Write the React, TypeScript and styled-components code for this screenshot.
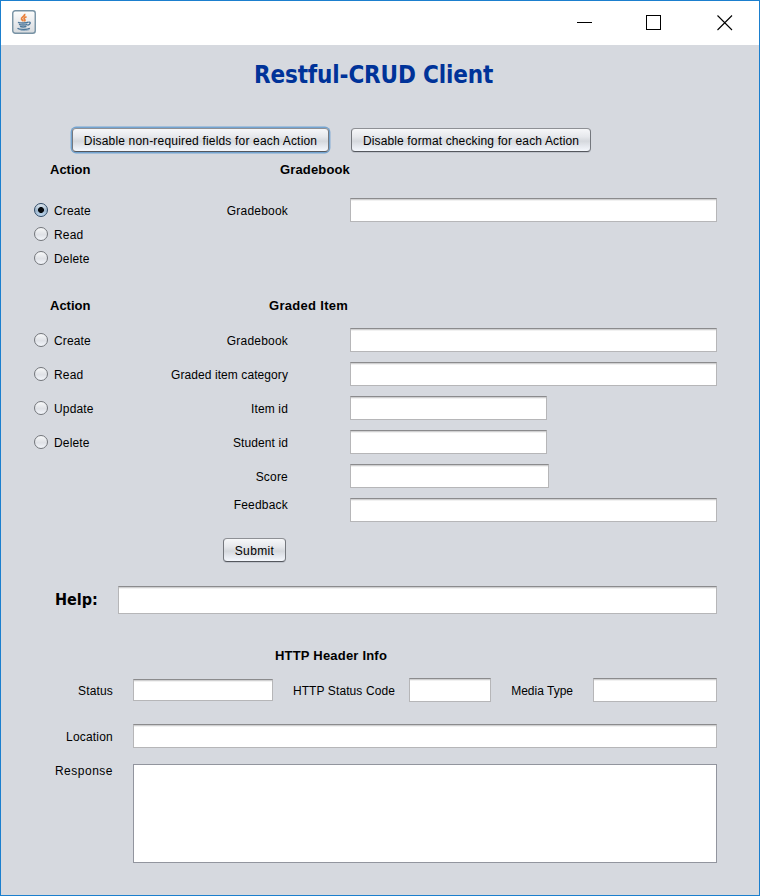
import React, { useState } from "react";
import styled, { createGlobalStyle, css } from "styled-components";

const GlobalStyle = createGlobalStyle`
  body { margin: 0; background: #d6d9df; }
  * { box-sizing: border-box; }
`;

const Window = styled.div`
  width: 760px;
  height: 896px;
  border: 1px solid #1b7fce;
  background: #d6d9df;
  color: #000;
  font: 12px/16px "Liberation Sans", Arial, sans-serif;
  overflow: hidden;
`;

const TitleBar = styled.header`
  height: 44px;
  padding: 9px 0 0 11px;
  background: #fff;
  display: flex;
  justify-content: space-between;
  align-items: flex-start;
`;

const WindowControls = styled.div`
  display: flex;
  gap: 54px;
  padding: 5px 26px 0 0;

  svg { display: block; }
  svg:last-child { margin-left: 2px; }
`;

const Title = styled.h1`
  margin: 0;
  height: 83px;
  padding: 15px 0 0 253px;
  font: bold 24px/30px "DejaVu Sans Condensed", "DejaVu Sans", sans-serif;
  font-stretch: condensed;
  letter-spacing: -0.15px;
  color: #003399;
  white-space: nowrap;
`;

const ButtonRow = styled.div<{ $left: number }>`
  display: flex;
  gap: 22px;
  height: 24px;
  padding-left: ${(p) => p.$left}px;
`;

const PushButton = styled.button<{ $width: number; $focused?: boolean; $spacing?: number }>`
  width: ${(p) => p.$width}px;
  height: 24px;
  padding: 1px 0 0;
  border: 1px solid;
  border-color: #8e9095 #74777d #55585e;
  border-radius: 4px;
  background: linear-gradient(#f6f7f9 0%, #e6e8ec 35%, #d5d8dd 55%, #e5e8ee 78%, #f5f8fd 100%);
  box-shadow: ${(p) => (p.$focused ? "0 0 0 1.4px #73a4d1" : "0 1px 0 rgba(150, 155, 165, 0.35)")};
  font: inherit;
  color: #000;
  letter-spacing: ${(p) => p.$spacing ?? 0}px;
  white-space: nowrap;
  outline: none;
`;

const Headings = styled.div<{ $top: number; $second: number }>`
  display: grid;
  grid-template-columns: ${(p) => p.$second - 50}px auto;
  height: 16px;
  margin: ${(p) => p.$top}px 0 0 49px;
`;

const Heading = styled.h2<{ $spacing?: number }>`
  margin: 0;
  font-size: 13px;
  line-height: 16px;
  font-weight: bold;
  letter-spacing: ${(p) => p.$spacing ?? 0}px;
  white-space: nowrap;
`;

const FormGrid = styled.div<{ $top: number; $pitch: number }>`
  display: grid;
  grid-template-columns: 100px 155px 1fr;
  grid-auto-rows: ${(p) => p.$pitch}px;
  margin: ${(p) => p.$top}px 0 0 32px;
`;

const RadioLabel = styled.label`
  grid-column: 1;
  display: flex;
  align-items: center;
  gap: 6px;
  height: 24px;
  padding-left: 1px;
  letter-spacing: 0.15px;
`;

const RadioText = styled.span`
  padding-top: 2px;
`;

const RadioInput = styled.input`
  appearance: none;
  width: 14px;
  height: 14px;
  margin: 0;
  border: 1px solid #73767b;
  border-radius: 50%;
  outline: none;
  background: linear-gradient(#f7f8f9, #dfe1e6 55%, #f3f6fb);

  &:checked {
    border-color: #2f4a66;
    background:
      radial-gradient(circle at center, #05080c 0 2.6px, transparent 3.3px),
      linear-gradient(#dfe8f0, #9db5cb 55%, #bcd6ee);
  }
`;

const FieldLabel = styled.label<{ $top?: number; $spacing?: number }>`
  grid-column: 2;
  height: 16px;
  margin-top: ${(p) => p.$top ?? 5}px;
  text-align: right;
  letter-spacing: ${(p) => p.$spacing ?? 0.15}px;
  white-space: nowrap;
`;

const fieldFrame = css`
  display: block;
  margin: 0;
  padding: 2px 5px;
  border: 1px solid #b6b6b8;
  border-radius: 0;
  outline: none;
  background: #fff;
  font: inherit;
`;

const TextField = styled.input<{ $width: number; $height?: number }>`
  ${fieldFrame}
  width: ${(p) => p.$width}px;
  height: ${(p) => p.$height ?? 24}px;
  border-top-color: #8b8b8d;
  box-shadow: inset 0 1px 0 #d0d0d1, inset 0 2px 0 #f1f1f1;
`;

const FormField = styled(TextField)`
  grid-column: 3;
  margin-left: 62px;
`;

const TextBox = styled.textarea`
  ${fieldFrame}
  width: 584px;
  height: 99px;
  border-color: #92959e;
  resize: none;
`;

const SubmitRow = styled(ButtonRow)`
  margin-top: 6px;
`;

const HelpRow = styled.div`
  display: grid;
  grid-template-columns: 63px auto;
  align-items: center;
  margin: 24px 0 0 54px;
  height: 28px;
`;

const HelpLabel = styled.label`
  font: bold 16px/22px "DejaVu Sans Condensed", "DejaVu Sans", sans-serif;
  font-stretch: condensed;
`;

const CenterHeading = styled(Heading)`
  margin: 34px 0 0 274px;
`;

const ResponseLabel = styled.label<{ $spacing?: number; $top?: number }>`
  height: 16px;
  margin-top: ${(p) => p.$top ?? 5}px;
  text-align: right;
  letter-spacing: ${(p) => p.$spacing ?? 0.15}px;
  white-space: nowrap;
`;

const StatusGrid = styled.div`
  display: grid;
  grid-template-columns: 112px 160px 122px 96px 82px auto;
  align-items: start;
  height: 24px;
  margin-top: 14px;
`;

const WideRow = styled.div<{ $top: number }>`
  display: grid;
  grid-template-columns: 112px auto;
  column-gap: 20px;
  margin-top: ${(p) => p.$top}px;
`;

const StatusField = styled(TextField)`
  margin: 1px 0 0 20px;
`;
const CodeField = styled(TextField)`
  margin-left: 14px;
`;
const MediaField = styled(TextField)`
  margin-left: 20px;
`;

const JavaIcon = () => (
  <svg width="24" height="24" viewBox="0 0 24 24" fill="none" aria-hidden="true">
    <defs>
      <linearGradient id="tile" x1="0" y1="0" x2="0" y2="1">
        <stop offset="0" stopColor="#fdfdfd" />
        <stop offset="1" stopColor="#d7dade" />
      </linearGradient>
    </defs>
    <rect x="0.75" y="0.75" width="22.5" height="22.5" rx="2.5" fill="url(#tile)" stroke="#7792a4" strokeWidth="1.4" />
    <path d="M12.5 3.8c1.3 2.4-3.8 3.2-3 5.3.3.8 1.6 1.2 1.7 2.2M14.6 6.8c-2.8 1-3.2 1.7-2 2.7.8.7.3 1.3-.4 1.7" stroke="#e9803b" strokeWidth="1.7" />
    <path d="M6 12.3c1.5.9 8.5.9 10.3-.1M7 14.4c1.5.8 7 .8 8.4 0M8 16.4c1.4.7 5 .7 6.4 0" stroke="#4d7699" strokeWidth="1.4" />
    <path d="M16.4 12.2c3-.6 2.2 2.3-1 3.2M5.5 18.3c1.7 1.4 10.2 1.4 12.3-.1" stroke="#4d7699" strokeWidth="1.3" />
    <path d="M8.5 20.3c3 .5 7 .2 9-.7" stroke="#7f9db6" strokeWidth="0.8" />
  </svg>
);

interface RadioProps {
  name: string;
  group: string;
  value: string;
  onSelect: (value: string) => void;
}

const Radio = ({ name, group, value, onSelect }: RadioProps) => (
  <RadioLabel>
    <RadioInput type="radio" name={group} checked={value === name} onChange={() => onSelect(name)} />
    <RadioText>{name}</RadioText>
  </RadioLabel>
);

const App = () => {
  const [bookAction, setBookAction] = useState("Create");
  const [itemAction, setItemAction] = useState("");
  const book = { group: "book", value: bookAction, onSelect: setBookAction };
  const item = { group: "item", value: itemAction, onSelect: setItemAction };

  return (
    <>
      <GlobalStyle />
      <Window>
        <TitleBar>
          <JavaIcon />
          <WindowControls>
            <svg width="15" height="16" stroke="#000" shapeRendering="crispEdges"><path d="M0 7.5h15" /></svg>
            <svg width="15" height="16" fill="none" stroke="#000" shapeRendering="crispEdges"><rect x="0.5" y="0.5" width="14" height="14" /></svg>
            <svg width="16" height="16" stroke="#000" strokeWidth="1.1"><path d="M.5 .5l14.5 14.5M15 .5L.5 15" /></svg>
          </WindowControls>
        </TitleBar>
        <Title>Restful-CRUD Client</Title>
        <ButtonRow $left={71}>
          <PushButton $width={257} $focused $spacing={0.185}>Disable non-required fields for each Action</PushButton>
          <PushButton $width={240} $spacing={0.14}>Disable format checking for each Action</PushButton>
        </ButtonRow>

        <Headings $top={10} $second={280}>
          <Heading>Action</Heading>
          <Heading $spacing={0.15}>Gradebook</Heading>
        </Headings>
        <FormGrid $top={20} $pitch={24}>
          <Radio name="Create" {...book} />
          <FieldLabel $spacing={0.2}>Gradebook</FieldLabel>
          <FormField $width={367} />
          <Radio name="Read" {...book} />
          <Radio name="Delete" {...book} />
        </FormGrid>

        <Headings $top={28} $second={269}>
          <Heading>Action</Heading>
          <Heading $spacing={0.3}>Graded Item</Heading>
        </Headings>
        <FormGrid $top={14} $pitch={34}>
          <Radio name="Create" {...item} />
          <FieldLabel $spacing={0.2}>Gradebook</FieldLabel>
          <FormField $width={367} />
          <Radio name="Read" {...item} />
          <FieldLabel $spacing={0.08}>Graded item category</FieldLabel>
          <FormField $width={367} />
          <Radio name="Update" {...item} />
          <FieldLabel>Item id</FieldLabel>
          <FormField $width={197} />
          <Radio name="Delete" {...item} />
          <FieldLabel $spacing={0.1}>Student id</FieldLabel>
          <FormField $width={197} />
          <FieldLabel $spacing={0.2}>Score</FieldLabel>
          <FormField $width={199} />
          <FieldLabel $top={-1} $spacing={0.2}>Feedback</FieldLabel>
          <FormField $width={367} />
        </FormGrid>
        <SubmitRow $left={222}>
          <PushButton $width={63} $spacing={0.35}>Submit</PushButton>
        </SubmitRow>

        <HelpRow>
          <HelpLabel>Help:</HelpLabel>
          <TextField $width={599} $height={28} />
        </HelpRow>

        <CenterHeading $spacing={0.2}>HTTP Header Info</CenterHeading>
        <StatusGrid>
          <ResponseLabel>Status</ResponseLabel>
          <StatusField $width={140} $height={22} />
          <ResponseLabel $spacing={0.1}>HTTP Status Code</ResponseLabel>
          <CodeField $width={82} />
          <ResponseLabel $spacing={0}>Media Type</ResponseLabel>
          <MediaField $width={124} />
        </StatusGrid>
        <WideRow $top={22}>
          <ResponseLabel $spacing={0.2}>Location</ResponseLabel>
          <TextField $width={584} />
        </WideRow>
        <WideRow $top={16}>
          <ResponseLabel $top={-1} $spacing={0.5}>Response</ResponseLabel>
          <TextBox />
        </WideRow>
      </Window>
    </>
  );
};

export default App;
